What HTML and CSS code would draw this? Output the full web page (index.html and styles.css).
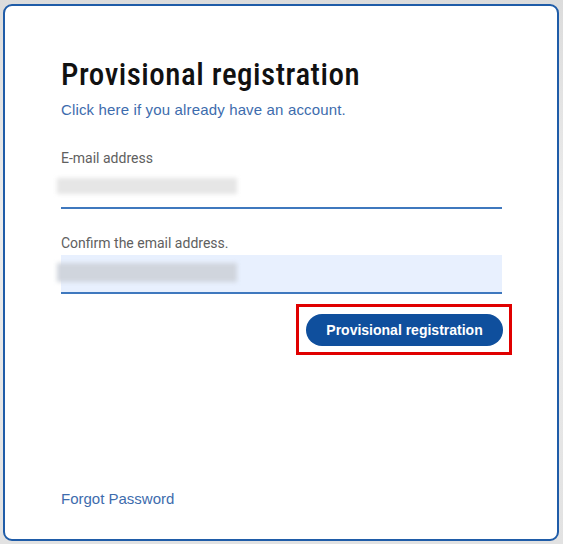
FILE: index.html
```html
<!DOCTYPE html>
<html lang="en">
<head>
<meta charset="utf-8">
<title>Provisional registration</title>
<link rel="stylesheet" href="styles.css">
</head>
<body>
<div class="card">
  <h1 class="title">Provisional registration</h1>
  <a class="link sub" href="#">Click here if you already have an account.</a>
  <label class="label first">E-mail address</label>
  <div class="input"><span class="blur"></span></div>
  <label class="label second">Confirm the email address.</label>
  <div class="input filled"><span class="blur dark"></span></div>
  <div class="actions">
    <div class="highlight"><button class="btn">Provisional registration</button></div>
  </div>
  <a class="link forgot" href="#">Forgot Password</a>
</div>
</body>
</html>
```
FILE: styles.css
```css
html, body { margin: 0; padding: 0; }
body {
  background: linear-gradient(180deg, #dcdcdc 0%, #ececec 40%, #e2e2e2 100%);
  width: 563px;
  height: 544px;
  overflow: hidden;
}
.card {
  box-sizing: border-box;
  margin: 4px 0 0 3px;
  width: 556px;
  height: 537px;
  background: #fff;
  border: 2px solid #1f5ca8;
  border-radius: 9px;
  padding: 51px 56px 30px 56px;
  display: flex;
  flex-direction: column;
  align-items: flex-start;
}
.title {
  margin: 0;
  font-family: "Roboto Condensed", "Liberation Sans", sans-serif;
  font-weight: 500;
  font-size: 31px;
  line-height: 36px;
  letter-spacing: 0.5px;
  color: #111;
}
.link {
  font-family: "Liberation Sans", Arial, sans-serif;
  font-size: 15px;
  line-height: 20px;
  color: #3d6cad;
  text-decoration: none;
}
.sub { margin-top: 7px; letter-spacing: 0.15px; }
.label {
  font-family: Roboto, "Liberation Sans", sans-serif;
  font-size: 14px;
  line-height: 18px;
  color: #606060;
}
.first { margin-top: 29px; }
.second { margin-top: 25px; }
.input {
  box-sizing: border-box;
  margin-top: 3px;
  width: 441px;
  height: 39px;
  border-bottom: 2px solid #3f78be;
  position: relative;
}
.input.filled { background: #e8f0fe; }
.blur {
  position: absolute;
  left: -4px;
  top: 8px;
  width: 180px;
  height: 16px;
  background: #e6e6e6;
  filter: blur(2px);
}
.blur.dark { top: 8px; height: 19px; background: #d0d5dd; }
.actions {
  margin-top: 10px;
  width: 441px;
  display: flex;
  justify-content: flex-end;
}
.highlight {
  margin-right: -10px;
  border: 3px solid #e00000;
  padding: 7px 6px 6px 7px;
}
.btn {
  display: block;
  width: 197px;
  height: 32px;
  border: 0;
  border-radius: 16px;
  background: #0f4f9d;
  color: #fff;
  font-family: "Liberation Sans", Arial, sans-serif;
  font-weight: 700;
  font-size: 14px;
  padding: 0;
}
.forgot { margin-top: auto; }
```
